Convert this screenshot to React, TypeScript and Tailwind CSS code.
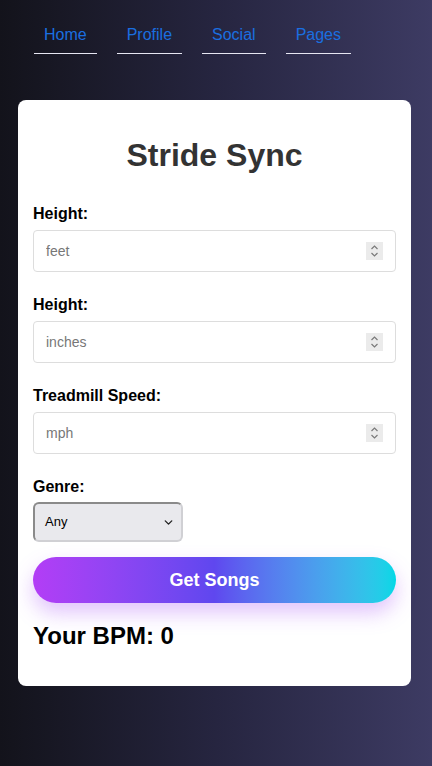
import { ChevronDown } from 'lucide-react';

const NAV = ['Home', 'Profile', 'Social', 'Pages'];

const FIELDS = [
  { label: 'Height:', placeholder: 'feet' },
  { label: 'Height:', placeholder: 'inches' },
  { label: 'Treadmill Speed:', placeholder: 'mph' },
];

function Spinner() {
  return (
    <div className="flex h-[18px] w-[17px] flex-col items-center justify-center bg-[#ebebeb]">
      <svg width="9" height="14" viewBox="0 0 9 14" fill="none" stroke="#7a7a7a" strokeWidth="1.2">
        <path d="M1.5 5 L4.5 2 L7.5 5" />
        <path d="M1.5 9 L4.5 12 L7.5 9" />
      </svg>
    </div>
  );
}

export default function App() {
  return (
    <div
      className="min-h-[766px] w-full bg-gradient-to-r from-[#13131b] via-[#262540] to-[#3d3b63] pt-[26px] pb-20"
      style={{ fontFamily: '"Liberation Sans", Arial, sans-serif' }}
    >
      <nav className="flex gap-5 pl-[34px]">
        {NAV.map((n) => (
          <a
            key={n}
            href="#"
            className="border-b border-[#e6e6f2] px-[10px] pb-[9px] text-base leading-[18px] text-[#1a6fe0]"
          >
            {n}
          </a>
        ))}
      </nav>

      <main className="mt-[46px] mr-[21px] ml-[18px] rounded-lg bg-white px-[15px] pt-[37px] pb-[36px]">
        <h1 className="text-center text-[32px] leading-[37px] font-bold text-[#333333]">Stride Sync</h1>

        <div className="mt-[31px]">
          {FIELDS.map((f, i) => (
            <div key={i} className="mb-[24px]">
              <label className="block text-base leading-[18px] font-bold text-black">{f.label}</label>
              <div className="mt-[7px] flex h-[42px] items-center rounded border border-[#dddddd] bg-white pr-[12px] pl-[12px]">
                <input
                  type="text"
                  placeholder={f.placeholder}
                  className="min-w-0 flex-1 bg-transparent text-sm text-[#333] outline-none placeholder:text-[#777777]"
                />
                <Spinner />
              </div>
            </div>
          ))}

          <label className="block text-base leading-[18px] font-bold text-black">Genre:</label>
          <div className="mt-[6px] flex h-[40px] w-[150px] items-center justify-between rounded-[6px] border-2 border-t-[#8a8a8a] border-r-[#d0d0d4] border-b-[#d0d0d4] border-l-[#8a8a8a] bg-[#e9e9ed] pr-[6px] pl-[10px] text-[13px] text-black">
            <span>Any</span>
            <ChevronDown size={13} strokeWidth={2.5} color="#222" />
          </div>

          <button className="mt-[15px] flex h-[46px] w-full items-center justify-center rounded-full bg-gradient-to-r from-[#b33df6] via-[#5f47ef] to-[#00d8e6] text-lg font-bold text-white shadow-[0_10px_20px_rgba(168,85,247,0.35)]">
            Get Songs
          </button>

          <h2 className="mt-[19px] text-2xl leading-[28px] font-bold text-black">Your BPM: 0</h2>
        </div>
      </main>
    </div>
  );
}
